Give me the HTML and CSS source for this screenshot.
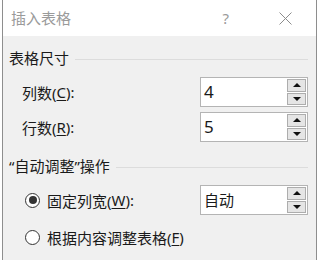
FILE: index.html
```html
<!DOCTYPE html>
<html lang="zh-CN">
<head>
    <meta charset="UTF-8">
    <title>插入表格</title>
    <link rel="stylesheet" href="styles.css">
</head>
<body>
    <div class="dialog">
        <div class="titlebar">
            <span class="title">插入表格</span>
            <span class="help">?</span>
            <span class="close">
                <svg width="13" height="13" viewBox="0 0 13 13"><path d="M0.5 0.5L12.5 12.5M12.5 0.5L0.5 12.5" stroke="#8c8c8c" stroke-width="1" fill="none"/></svg>
            </span>
        </div>
        <div class="content">
            <div class="group-title"><span>表格尺寸</span><i class="rule"></i></div>
            <div class="row first">
                <span class="label">列数(<u>C</u>):</span>
                <div class="spin">
                    <span class="value num">4</span>
                    <div class="buttons">
                        <span class="btn"><i class="up"></i></span>
                        <span class="btn"><i class="down"></i></span>
                    </div>
                </div>
            </div>
            <div class="row second">
                <span class="label">行数(<u>R</u>):</span>
                <div class="spin">
                    <span class="value num">5</span>
                    <div class="buttons">
                        <span class="btn"><i class="up"></i></span>
                        <span class="btn"><i class="down"></i></span>
                    </div>
                </div>
            </div>

            <div class="group-title auto"><span>“自动调整”操作</span><i class="rule"></i></div>
            <div class="row first">
                <span class="label radio-label"><i class="radio checked"></i>固定列宽(<u>W</u>):</span>
                <div class="spin">
                    <span class="value">自动</span>
                    <div class="buttons">
                        <span class="btn"><i class="up"></i></span>
                        <span class="btn"><i class="down"></i></span>
                    </div>
                </div>
            </div>
            <div class="row radio-row">
                <span class="label radio-label"><i class="radio"></i>根据内容调整表格(<u>F</u>)</span>
            </div>
        </div>
    </div>
</body>
</html>
```

FILE: styles.css
```css
body {
    margin: 0;
    background: #fff;
    font-family: "Noto Sans", "Noto Sans CJK SC", sans-serif;
    color: #1a1a1a;
}
.dialog {
    margin-left: 2px;
    width: 313px;
    height: 260px;
    border-left: 1px solid #8e8e8e;
    border-right: 1px solid #8e8e8e;
    background: #f0f0f0;
}
.titlebar {
    height: 36px;
    background: #fff;
    display: flex;
    align-items: center;
    font-size: 15px;
    color: #9a9a9a;
}
.title {
    margin-left: 8px;
    line-height: 20px;
}
.help {
    margin-left: auto;
    font-size: 15px;
}
.close {
    display: flex;
    margin-left: 50px;
    margin-right: 24px;
}
.content {
    padding: 12px 8px 0 6px;
    font-size: 15px;
}
.group-title {
    display: flex;
    align-items: center;
    height: 20px;
    line-height: 20px;
}
.group-title.auto {
    margin-top: 14px;
}
.rule {
    flex: 1;
    margin-left: 6px;
    margin-top: 2px;
    border-top: 1px solid #dcdcdc;
}
.row {
    display: flex;
    align-items: center;
    height: 30px;
    padding-left: 13px;
}
.row.first {
    margin-top: 9px;
}
.row.second {
    margin-top: 5px;
}
.row.radio-row {
    margin-top: 7px;
}
.label {
    display: flex;
    align-items: center;
}
.label u {
    text-decoration-thickness: 1px;
    text-underline-offset: 2px;
}
.spin {
    margin-left: auto;
    width: 106px;
    height: 28px;
    border: 1px solid #b4b4b4;
    background: #fff;
    display: flex;
}
.value {
    flex: 1;
    padding-left: 3px;
    line-height: 28px;
    font-size: 15px;
}
.value.num {
    font-size: 17px;
}
.buttons {
    display: flex;
    flex-direction: column;
    gap: 1px;
    padding: 1px 1px 1px 0;
}
.btn {
    width: 17px;
    height: 12px;
    border: 1px solid #adadad;
    background: #e5e5e5;
    display: flex;
    align-items: center;
    justify-content: center;
}
.up {
    border-left: 4px solid transparent;
    border-right: 4px solid transparent;
    border-bottom: 4px solid #111;
}
.down {
    border-left: 4px solid transparent;
    border-right: 4px solid transparent;
    border-top: 4px solid #111;
}
.radio {
    width: 13px;
    height: 13px;
    border: 1px solid #333;
    border-radius: 50%;
    background: #fff;
    margin-left: 3px;
    margin-right: 7px;
    display: flex;
    align-items: center;
    justify-content: center;
}
.radio.checked::after {
    content: "";
    width: 8px;
    height: 8px;
    border-radius: 50%;
    background: #333;
}
```
